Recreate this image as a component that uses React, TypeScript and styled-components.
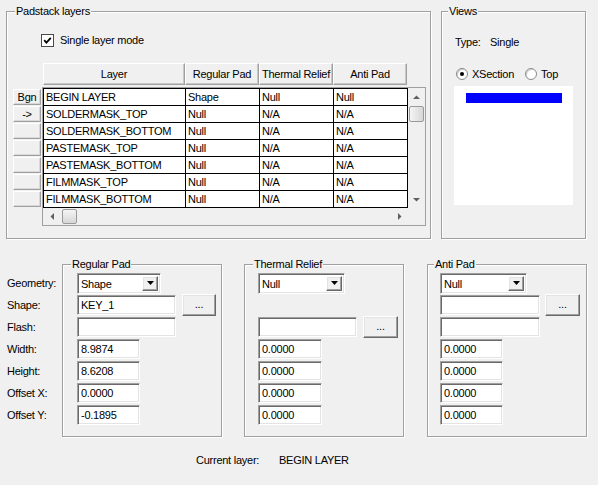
import React from 'react';
import styled, { createGlobalStyle, css } from 'styled-components';

const GlobalStyle = createGlobalStyle`
  html, body { margin: 0; padding: 0; background: #f0f0f0; }
  body {
    font-family: "Liberation Sans", Arial, sans-serif;
    font-size: 11px;
    color: #000;
    letter-spacing: -0.25px;
  }
`;

const raised = css`
  box-sizing: border-box;
  background: #f0f0f0;
  border-style: solid;
  border-width: 1px;
  border-color: #ffffff #696969 #696969 #ffffff;
  box-shadow: inset -1px -1px 0 #a0a0a0, inset 1px 1px 0 #e3e3e3;
`;

const sunken = css`
  box-sizing: border-box;
  background: #ffffff;
  border-style: solid;
  border-width: 1px;
  border-color: #a0a0a0 #ffffff #ffffff #a0a0a0;
  box-shadow: inset 1px 1px 0 #696969, inset -1px -1px 0 #e3e3e3;
`;

const Dialog = styled.div`
  width: 598px;
  height: 485px;
  box-sizing: border-box;
  padding-top: 11px;
  background: #f0f0f0;
  display: flex;
  flex-direction: column;
  overflow: hidden;
`;

const TopRow = styled.div`
  display: flex;
  gap: 10px;
  padding-left: 6px;
`;

const Group = styled.div<{ $w: number; $h: number; $ml?: number }>`
  position: relative;
  box-sizing: border-box;
  flex: none;
  width: ${(p) => p.$w}px;
  height: ${(p) => p.$h}px;
  margin-left: ${(p) => p.$ml ?? 0}px;
  border: 1px solid #a0a0a0;
  box-shadow: inset 1px 1px 0 #ffffff, 1px 1px 0 #ffffff;
`;

const Legend = styled.span<{ $lx: number }>`
  position: absolute;
  top: -7px;
  left: ${(p) => p.$lx}px;
  padding: 0 1px;
  line-height: 13px;
  background: #f0f0f0;
  white-space: nowrap;
`;

/* ---------- Padstack layers ---------- */

const LayersBody = styled.div`
  display: flex;
  flex-direction: column;
  padding-top: 22px;
`;

const CheckRow = styled.div`
  display: flex;
  align-items: center;
  gap: 6px;
  margin-left: 34px;
  height: 13px;
  line-height: 13px;
`;

const CheckBox = styled.span`
  width: 13px;
  height: 13px;
  box-sizing: border-box;
  border: 1px solid #4a4a4a;
  background: #ffffff;
  display: flex;
  align-items: center;
  justify-content: center;
`;

const HeaderRow = styled.div`
  display: flex;
  margin: 16px 0 0 36px;
  height: 22px;
`;

const HeaderCell = styled.div<{ $w: number }>`
  ${raised};
  border-color: #ffffff #a0a0a0 #a0a0a0 #ffffff;
  box-shadow: inset -1px -1px 0 #c8c8c8;
  width: ${(p) => p.$w}px;
  height: 22px;
  display: flex;
  align-items: center;
  justify-content: center;
  white-space: nowrap;
`;

const TableArea = styled.div`
  display: flex;
  align-items: flex-start;
  gap: 1px;
  margin: 2px 0 0 6px;
`;

const RowButtons = styled.div`
  display: flex;
  flex-direction: column;
  gap: 1px;
  margin-top: 2px;
`;

const RowButton = styled.div`
  ${raised};
  border-color: #ffffff #a0a0a0 #a0a0a0 #ffffff;
  box-shadow: inset -1px -1px 0 #d8d8d8;
  width: 28px;
  height: 16px;
  display: flex;
  align-items: center;
  justify-content: center;
  line-height: 14px;
`;

const Grid = styled.div`
  width: 384px;
  box-sizing: border-box;
  border: 1px solid #a0a0a0;
  display: flex;
  flex-direction: column;
`;

const GridBody = styled.div`
  display: flex;
`;

const Cells = styled.div`
  width: 365px;
  box-sizing: border-box;
  border-left: 1px solid #000;
  border-top: 1px solid #000;
  display: flex;
  flex-direction: column;
`;

const Row = styled.div`
  display: flex;
  height: 17px;
  box-sizing: border-box;
  border-bottom: 1px solid #000;
`;

const Cell = styled.div<{ $w: number }>`
  width: ${(p) => p.$w}px;
  flex: none;
  box-sizing: border-box;
  border-right: 1px solid #000;
  background: #ffffff;
  padding-left: 2px;
  line-height: 16px;
  white-space: nowrap;
  overflow: hidden;
`;

const VScroll = styled.div`
  width: 17px;
  height: 120px;
  background: #f0f0f0;
  display: flex;
  flex-direction: column;
`;

const ScrollArrow = styled.div`
  width: 17px;
  height: 17px;
  flex: none;
  display: flex;
  align-items: center;
  justify-content: center;
`;

const ScrollSpacer = styled.div`
  flex: 1;
`;

const VThumb = styled.div`
  width: 15px;
  height: 16px;
  margin: 1px 1px 0 1px;
  box-sizing: border-box;
  border: 1px solid #9a9a9a;
  border-radius: 2px;
  background: linear-gradient(to right, #f4f4f4, #e6e6e6 50%, #d6d6d6);
`;

const HScroll = styled.div`
  height: 17px;
  background: #f0f0f0;
  display: flex;
  align-items: center;
`;

const HThumb = styled.div`
  width: 15px;
  height: 15px;
  margin-left: 2px;
  box-sizing: border-box;
  border: 1px solid #9a9a9a;
  border-radius: 2px;
  background: linear-gradient(to bottom, #f4f4f4, #e6e6e6 50%, #d6d6d6);
`;

const Corner = styled.div`
  width: 17px;
  height: 17px;
  background: #f0f0f0;
`;

/* ---------- Views ---------- */

const ViewsBody = styled.div`
  display: flex;
  flex-direction: column;
  padding: 24px 0 0 12px;
`;

const TypeRow = styled.div`
  display: flex;
  margin-left: 1px;
  line-height: 13px;
`;

const TypeLabel = styled.span`
  width: 35px;
`;

const RadioRow = styled.div`
  display: flex;
  align-items: center;
  height: 13px;
  margin: 18px 0 0 2px;
`;

const RadioItem = styled.div<{ $ml?: number }>`
  display: flex;
  align-items: center;
  gap: 4px;
  margin-left: ${(p) => p.$ml ?? 0}px;
`;

const Radio = styled.span<{ $on?: boolean }>`
  width: 12px;
  height: 12px;
  box-sizing: border-box;
  border-radius: 50%;
  border: 1px solid #8a8a8a;
  background: #ffffff;
  box-shadow: inset 1px 1px 0 #d0d0d0;
  display: flex;
  align-items: center;
  justify-content: center;
  &::after {
    content: '';
    width: 4px;
    height: 4px;
    border-radius: 50%;
    background: ${(p) => (p.$on ? '#000' : 'transparent')};
  }
`;

const Preview = styled.div`
  width: 119px;
  height: 119px;
  margin-top: 6px;
  background: #ffffff;
  box-sizing: border-box;
  padding: 7px 0 0 12px;
`;

const LayerBar = styled.div`
  width: 96px;
  height: 10px;
  background: #0000ff;
`;

/* ---------- Bottom ---------- */

const BottomRow = styled.div`
  display: flex;
  margin-top: 25px;
  padding-left: 7px;
`;

const LabelCol = styled.div`
  width: 55px;
  flex: none;
  padding-top: 8px;
  display: flex;
  flex-direction: column;
`;

const FieldLabel = styled.div`
  height: 22px;
  line-height: 22px;
  white-space: nowrap;
`;

const PadBody = styled.div<{ $pl: number }>`
  display: flex;
  flex-direction: column;
  padding: 7px 0 0 ${(p) => p.$pl}px;
`;

const FieldRow = styled.div`
  height: 22px;
  display: flex;
  align-items: center;
`;

const Edit = styled.div<{ $w: number }>`
  ${sunken};
  width: ${(p) => p.$w}px;
  height: 20px;
  padding-left: 3px;
  line-height: 18px;
  white-space: nowrap;
`;

const Combo = styled.div<{ $w: number }>`
  ${sunken};
  width: ${(p) => p.$w}px;
  height: 21px;
  padding: 2px;
  display: flex;
  align-items: stretch;
`;

const ComboText = styled.div`
  flex: 1;
  padding-left: 1px;
  line-height: 17px;
`;

const ComboButton = styled.div`
  ${raised};
  width: 16px;
  display: flex;
  align-items: center;
  justify-content: center;
`;

const DotsButton = styled.div<{ $w: number; $ml: number }>`
  ${raised};
  width: ${(p) => p.$w}px;
  height: 22px;
  margin-left: ${(p) => p.$ml}px;
  display: flex;
  align-items: center;
  justify-content: center;
  padding-bottom: 2px;
`;

const CurrentRow = styled.div`
  display: flex;
  margin-top: 17px;
  padding-left: 196px;
  line-height: 13px;
`;

const CurrentLabel = styled.span`
  width: 83px;
`;

/* ---------- icons ---------- */

const Tri = ({ dir, color = '#606060' }: { dir: 'up' | 'down' | 'left' | 'right'; color?: string }) => {
  const pts = {
    up: '0,4 7,4 3.5,0.5',
    down: '0,0 7,0 3.5,3.5',
    left: '4,0 4,7 0.5,3.5',
    right: '0,0 0,7 3.5,3.5',
  }[dir];
  const vert = dir === 'up' || dir === 'down';
  return (
    <svg width={vert ? 7 : 4} height={vert ? 4 : 7} viewBox={vert ? '0 0 7 4' : '0 0 4 7'}>
      <polygon points={pts} fill={color} />
    </svg>
  );
};

const ComboArrow = () => (
  <svg width="7" height="4" viewBox="0 0 7 4">
    <polygon points="0,0 7,0 3.5,4" fill="#000" />
  </svg>
);

const Check = () => (
  <svg width="9" height="9" viewBox="0 0 9 9">
    <polyline points="1.2,4.2 3.4,6.6 7.8,1.8" fill="none" stroke="#000" strokeWidth="1.8" />
  </svg>
);

const layers = [
  ['Bgn', 'BEGIN LAYER', 'Shape', 'Null', 'Null'],
  ['->', 'SOLDERMASK_TOP', 'Null', 'N/A', 'N/A'],
  ['', 'SOLDERMASK_BOTTOM', 'Null', 'N/A', 'N/A'],
  ['', 'PASTEMASK_TOP', 'Null', 'N/A', 'N/A'],
  ['', 'PASTEMASK_BOTTOM', 'Null', 'N/A', 'N/A'],
  ['', 'FILMMASK_TOP', 'Null', 'N/A', 'N/A'],
  ['', 'FILMMASK_BOTTOM', 'Null', 'N/A', 'N/A'],
];
const colWidths = [142, 74, 74, 74];
const headers = ['Layer', 'Regular Pad', 'Thermal Relief', 'Anti Pad'];

const ValueRows = ({ values, w }: { values: string[]; w: number }) => (
  <>
    {values.map((v, i) => (
      <FieldRow key={i}>
        <Edit $w={w}>{v}</Edit>
      </FieldRow>
    ))}
  </>
);

export default function App() {
  return (
    <>
      <GlobalStyle />
      <Dialog>
        <TopRow>
          <Group $w={425} $h={228}>
            <Legend $lx={8}>Padstack layers</Legend>
            <LayersBody>
              <CheckRow>
                <CheckBox>
                  <Check />
                </CheckBox>
                <span>Single layer mode</span>
              </CheckRow>
              <HeaderRow>
                {headers.map((h, i) => (
                  <HeaderCell key={h} $w={colWidths[i]}>
                    {h}
                  </HeaderCell>
                ))}
              </HeaderRow>
              <TableArea>
                <RowButtons>
                  {layers.map((r, i) => (
                    <RowButton key={i}>{r[0]}</RowButton>
                  ))}
                </RowButtons>
                <Grid>
                  <GridBody>
                    <Cells>
                      {layers.map((r, i) => (
                        <Row key={i}>
                          {r.slice(1).map((c, j) => (
                            <Cell key={j} $w={colWidths[j]}>
                              {c}
                            </Cell>
                          ))}
                        </Row>
                      ))}
                    </Cells>
                    <VScroll>
                      <ScrollArrow>
                        <Tri dir="up" />
                      </ScrollArrow>
                      <VThumb />
                      <ScrollSpacer />
                      <ScrollArrow>
                        <Tri dir="down" />
                      </ScrollArrow>
                    </VScroll>
                  </GridBody>
                  <HScroll>
                    <ScrollArrow>
                      <Tri dir="left" />
                    </ScrollArrow>
                    <HThumb />
                    <ScrollSpacer />
                    <ScrollArrow>
                      <Tri dir="right" />
                    </ScrollArrow>
                    <Corner />
                  </HScroll>
                </Grid>
              </TableArea>
            </LayersBody>
          </Group>

          <Group $w={145} $h={228}>
            <Legend $lx={6}>Views</Legend>
            <ViewsBody>
              <TypeRow>
                <TypeLabel>Type:</TypeLabel>
                <span>Single</span>
              </TypeRow>
              <RadioRow>
                <RadioItem>
                  <Radio $on />
                  <span>XSection</span>
                </RadioItem>
                <RadioItem $ml={11}>
                  <Radio />
                  <span>Top</span>
                </RadioItem>
              </RadioRow>
              <Preview>
                <LayerBar />
              </Preview>
            </ViewsBody>
          </Group>
        </TopRow>

        <BottomRow>
          <LabelCol>
            {['Geometry:', 'Shape:', 'Flash:', 'Width:', 'Height:', 'Offset X:', 'Offset Y:'].map((l) => (
              <FieldLabel key={l}>{l}</FieldLabel>
            ))}
          </LabelCol>

          <Group $w={160} $h={173}>
            <Legend $lx={8}>Regular Pad</Legend>
            <PadBody $pl={14}>
              <FieldRow>
                <Combo $w={84}>
                  <ComboText>Shape</ComboText>
                  <ComboButton>
                    <ComboArrow />
                  </ComboButton>
                </Combo>
              </FieldRow>
              <FieldRow>
                <Edit $w={99}>KEY_1</Edit>
                <DotsButton $w={34} $ml={6}>...</DotsButton>
              </FieldRow>
              <FieldRow>
                <Edit $w={99} />
              </FieldRow>
              <ValueRows values={['8.9874', '8.6208', '0.0000', '-0.1895']} w={63} />
            </PadBody>
          </Group>

          <Group $w={160} $h={173} $ml={22}>
            <Legend $lx={8}>Thermal Relief</Legend>
            <PadBody $pl={13}>
              <FieldRow>
                <Combo $w={87}>
                  <ComboText>Null</ComboText>
                  <ComboButton>
                    <ComboArrow />
                  </ComboButton>
                </Combo>
              </FieldRow>
              <FieldRow />
              <FieldRow>
                <Edit $w={99} />
                <DotsButton $w={35} $ml={6}>...</DotsButton>
              </FieldRow>
              <ValueRows values={['0.0000', '0.0000', '0.0000', '0.0000']} w={64} />
            </PadBody>
          </Group>

          <Group $w={160} $h={173} $ml={23}>
            <Legend $lx={6}>Anti Pad</Legend>
            <PadBody $pl={12}>
              <FieldRow>
                <Combo $w={87}>
                  <ComboText>Null</ComboText>
                  <ComboButton>
                    <ComboArrow />
                  </ComboButton>
                </Combo>
              </FieldRow>
              <FieldRow>
                <Edit $w={100} />
                <DotsButton $w={35} $ml={5}>...</DotsButton>
              </FieldRow>
              <FieldRow>
                <Edit $w={100} />
              </FieldRow>
              <ValueRows values={['0.0000', '0.0000', '0.0000', '0.0000']} w={63} />
            </PadBody>
          </Group>
        </BottomRow>

        <CurrentRow>
          <CurrentLabel>Current layer:</CurrentLabel>
          <span>BEGIN LAYER</span>
        </CurrentRow>
      </Dialog>
    </>
  );
}
